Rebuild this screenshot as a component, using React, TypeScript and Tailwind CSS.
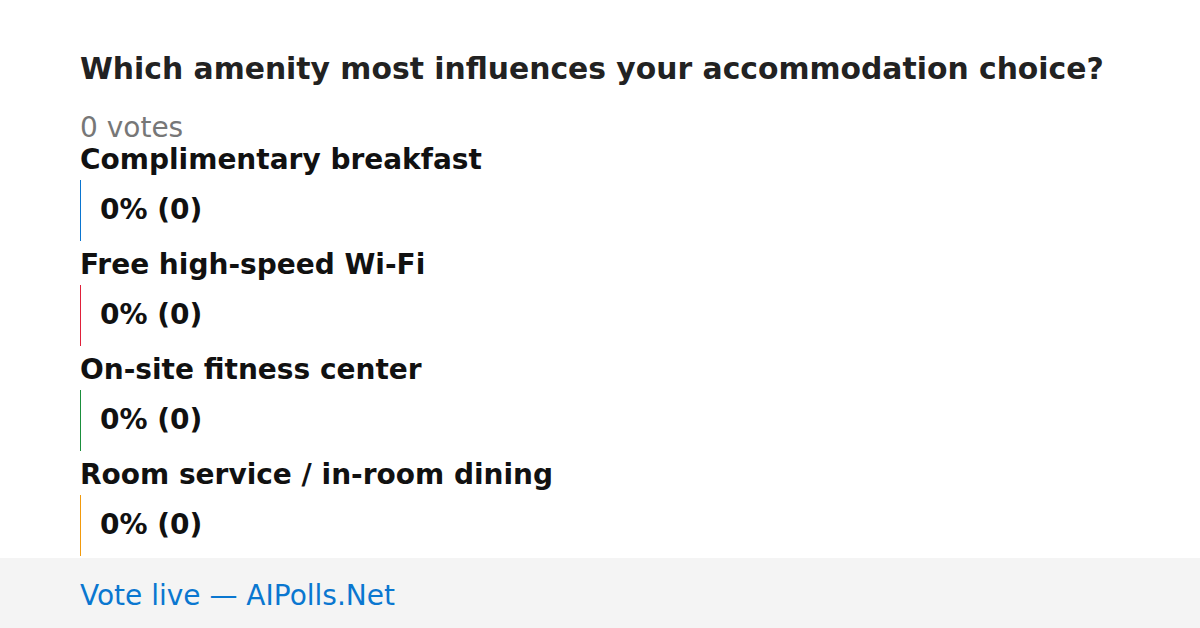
const options = [
  { label: 'Complimentary breakfast', color: 'border-[#0a75d0]' },
  { label: 'Free high-speed Wi-Fi', color: 'border-[#e0203a]' },
  { label: 'On-site fitness center', color: 'border-[#1a8f3c]' },
  { label: 'Room service / in-room dining', color: 'border-[#f29a0c]' },
];

export default function App() {
  return (
    <div className="w-[1200px] h-[628px] bg-white flex flex-col font-['DejaVu_Sans',sans-serif] overflow-hidden">
      {/* Poll body */}
      <div className="h-[558px] overflow-hidden px-[80px] pt-[51px]">
        <h1 className="text-[29.8px] leading-[35px] font-bold text-[#222]">
          Which amenity most influences your accommodation choice?
        </h1>
        <div className="mt-[26px] text-[28px] leading-[32px] text-[#777]">0 votes</div>

        <div className="flex flex-col">
          {options.map((opt) => (
            <div key={opt.label} className="flex flex-col pb-[8px]">
              <div className="text-[28px] leading-[32px] font-bold text-[#111]">{opt.label}</div>
              <div className={`mt-[4px] h-[61px] border-l ${opt.color} pl-[19px] pt-[14px]`}>
                <span className="block text-[28px] leading-[32px] font-bold text-[#111]">0% (0)</span>
              </div>
            </div>
          ))}
        </div>
      </div>

      {/* Footer */}
      <div className="h-[70px] bg-[#f4f4f4] flex items-center px-[80px] pt-[6px]">
        <span className="text-[28px] leading-[32px] text-[#0a77d0]">Vote live — AIPolls.Net</span>
      </div>
    </div>
  );
}
